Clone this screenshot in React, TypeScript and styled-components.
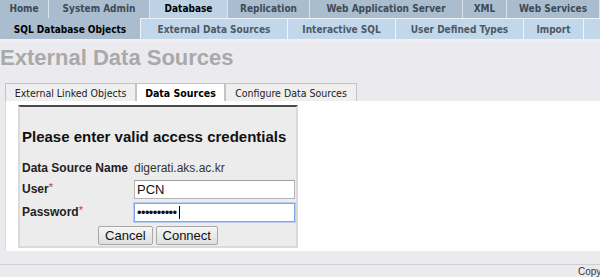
import React from "react";
import styled, { createGlobalStyle, css } from "styled-components";

const GlobalStyle = createGlobalStyle`
  html, body { margin: 0; padding: 0; }
  body {
    background: #ebebef;
    overflow: hidden;
    font-family: "Liberation Sans", Arial, sans-serif;
  }
`;

const navFont = `"Tahoma", "DejaVu Sans Condensed", "DejaVu Sans", sans-serif`;

const Page = styled.div`
  width: 600px;
  height: 277px;
  overflow: hidden;
  display: flex;
  flex-direction: column;
`;

const NavRow = styled.div`
  display: flex;
  height: 19px;
  background: #a9bdcf;
`;

const NavTab = styled.div<{ $w: number; $active?: boolean }>`
  flex: 0 0 ${(p) => p.$w}px;
  box-sizing: border-box;
  display: flex;
  align-items: center;
  justify-content: center;
  padding-bottom: 2px;
  font-family: ${navFont};
  font-weight: bold;
  font-size: 10px;
  white-space: nowrap;
  color: #3e4a56;
  background: #a9bdcf;
  border-right: 1px solid #dbe5ee;
  ${(p) =>
    p.$active &&
    css`
      background: #bdd2e5;
      color: #000;
    `}
`;

const SubNavRow = styled.div`
  display: flex;
  height: 22px;
  background: #c3d7ea;
`;

const SubNavTab = styled.div<{ $w?: number; $active?: boolean }>`
  flex: ${(p) => (p.$w ? `0 0 ${p.$w}px` : "1 1 auto")};
  box-sizing: border-box;
  display: flex;
  align-items: center;
  justify-content: center;
  font-family: ${navFont};
  font-weight: bold;
  font-size: 10px;
  white-space: nowrap;
  color: #4d5965;
  background: #c3d7ea;
  border-left: 1px solid #eef4fa;
  border-top: 1px solid #eef4fa;
  ${(p) =>
    p.$active &&
    css`
      background: #a9bdcf;
      color: #000;
      border-left: none;
      border-top-color: #a9bdcf;
    `}
`;

const NavStrip = styled.div`
  height: 3px;
  background: #eef0f5;
`;

const Title = styled.h1`
  margin: 3px 0 0 0;
  height: 26px;
  font-family: "Liberation Sans", Arial, sans-serif;
  font-size: 22px;
  line-height: 26px;
  font-weight: bold;
  color: #a9a9a9;
`;

const TabStrip = styled.div`
  display: flex;
  margin: 12px 0 0 5px;
  height: 19px;
`;

const PanelTab = styled.div<{ $w: number; $active?: boolean }>`
  flex: 0 0 ${(p) => p.$w}px;
  box-sizing: border-box;
  display: flex;
  align-items: center;
  justify-content: center;
  font-family: ${navFont};
  font-size: 10.5px;
  white-space: nowrap;
  color: #222;
  background: #efefef;
  border: 1px solid #c4c4c4;
  border-bottom: none;
  ${(p) =>
    p.$active &&
    css`
      background: #fff;
      font-weight: bold;
      color: #000;
    `}
`;

const Panel = styled.div`
  margin-left: 5px;
  background: #fff;
  border-left: 1px solid #dadada;
  padding: 4px 0 3px 12px;
`;

const CredBox = styled.div`
  width: 280px;
  box-sizing: border-box;
  background: #ececec;
  border: 2px solid #dadada;
  border-top: 2px solid #4a4a4a;
  padding: 0 2px 1px 2px;
`;

const Heading = styled.h2`
  margin: 20px 0 0 0;
  font-size: 15px;
  line-height: 19px;
  font-weight: bold;
  white-space: nowrap;
  color: #111;
`;

const FormGrid = styled.div`
  display: grid;
  grid-template-columns: 112px 161px;
  row-gap: 4px;
  margin-top: 15px;
  align-items: center;
`;

const Label = styled.div`
  font-size: 12px;
  line-height: 15px;
  font-weight: bold;
  color: #222;
`;

const Required = styled.span`
  color: #d03030;
  font-weight: normal;
  vertical-align: top;
  font-size: 11px;
  line-height: 11px;
`;

const Value = styled.div`
  font-size: 12px;
  line-height: 15px;
  color: #333;
`;

const FieldWrap = styled.div`
  position: relative;
  height: 19px;
`;

const Field = styled.input<{ $focused?: boolean }>`
  box-sizing: border-box;
  width: 161px;
  height: 19px;
  margin: 0;
  padding: 0 2px;
  font-family: "Liberation Sans", Arial, sans-serif;
  font-size: 13px;
  color: #111;
  background: #fff;
  border: 1px solid #b4b4b4;
  border-top-color: #a0a0a0;
  outline: none;
  ${(p) =>
    p.$focused &&
    css`
      border-color: #7ea6e4;
      box-shadow: 0 0 0 1px #b9cff2;
      letter-spacing: -0.6px;
    `}
`;

const Caret = styled.span`
  position: absolute;
  top: 3px;
  width: 1px;
  height: 13px;
  background: #000;
`;

const ButtonRow = styled.div`
  display: flex;
  justify-content: center;
  gap: 3px;
  margin-top: 4px;
`;

const Button = styled.button`
  height: 19px;
  box-sizing: border-box;
  padding: 0 6px;
  font-family: "Liberation Sans", Arial, sans-serif;
  font-size: 13px;
  color: #111;
  background: linear-gradient(#f6f6f6, #dedede);
  border: 1px solid #a8a8a8;
  border-radius: 2px;
`;

const Gap = styled.div`
  height: 13px;
  flex: 0 0 13px;
`;

const Footer = styled.div`
  border-top: 1px solid #cfcfd4;
  height: 12px;
  padding-left: 578px;
  white-space: nowrap;
  overflow: hidden;
  font-family: "Liberation Sans", Arial, sans-serif;
  font-size: 10px;
  line-height: 14px;
  color: #333;
`;

const topTabs = [
  { label: "Home", w: 49 },
  { label: "System Admin", w: 101 },
  { label: "Database", w: 78, active: true },
  { label: "Replication", w: 82 },
  { label: "Web Application Server", w: 153 },
  { label: "XML", w: 44 },
  { label: "Web Services", w: 93 },
];

const subTabs = [
  { label: "SQL Database Objects", w: 140, active: true },
  { label: "External Data Sources", w: 147 },
  { label: "Interactive SQL", w: 108 },
  { label: "User Defined Types", w: 128 },
  { label: "Import", w: 60 },
];

const panelTabs = [
  { label: "External Linked Objects", w: 131 },
  { label: "Data Sources", w: 89, active: true },
  { label: "Configure Data Sources", w: 132 },
];

export default function App() {
  return (
    <Page>
      <GlobalStyle />
      <NavRow>
        {topTabs.map((t) => (
          <NavTab key={t.label} $w={t.w} $active={t.active}>
            {t.label}
          </NavTab>
        ))}
      </NavRow>
      <SubNavRow>
        {subTabs.map((t) => (
          <SubNavTab key={t.label} $w={t.w} $active={t.active}>
            {t.label}
          </SubNavTab>
        ))}
        <SubNavTab />
      </SubNavRow>
      <NavStrip />
      <Title>External Data Sources</Title>
      <TabStrip>
        {panelTabs.map((t) => (
          <PanelTab key={t.label} $w={t.w} $active={t.active}>
            {t.label}
          </PanelTab>
        ))}
      </TabStrip>
      <Panel>
        <CredBox>
          <Heading>Please enter valid access credentials</Heading>
          <FormGrid>
            <Label>Data Source Name</Label>
            <Value>digerati.aks.ac.kr</Value>
            <Label>
              User<Required>*</Required>
            </Label>
            <FieldWrap>
              <Field type="text" defaultValue="PCN" readOnly />
            </FieldWrap>
            <Label>
              Password<Required>*</Required>
            </Label>
            <FieldWrap>
              <Field type="password" defaultValue="abcdefghij" readOnly $focused />
              <Caret style={{ left: 45 }} />
            </FieldWrap>
          </FormGrid>
          <ButtonRow>
            <Button>Cancel</Button>
            <Button>Connect</Button>
          </ButtonRow>
        </CredBox>
      </Panel>
      <Gap />
      <Footer>Copyright © 2012 OpenLink Software</Footer>
    </Page>
  );
}
